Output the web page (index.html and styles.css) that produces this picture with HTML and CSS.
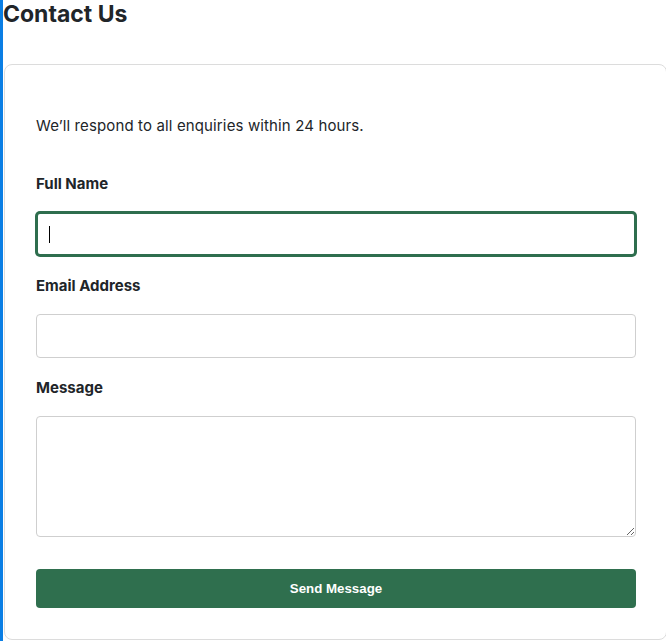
FILE: index.html
```html
<!DOCTYPE html>
<html lang="en">
<head>
<meta charset="utf-8">
<title>Contact Us</title>
<link rel="stylesheet" href="styles.css">
</head>
<body>
  <h1 class="title">Contact Us</h1>
  <div class="card">
    <p class="intro">We’ll respond to all enquiries within 24 hours.</p>
    <form class="form">
      <div class="field">
        <label class="label" for="name">Full Name</label>
        <div class="control">
          <input class="input input-focus" id="name" type="text">
          <span class="caret"></span>
        </div>
      </div>
      <div class="field">
        <label class="label" for="email">Email Address</label>
        <input class="input" id="email" type="email">
      </div>
      <div class="field">
        <label class="label" for="msg">Message</label>
        <textarea class="input textarea" id="msg"></textarea>
      </div>
      <button class="btn" type="button">Send Message</button>
    </form>
  </div>
</body>
</html>
```

FILE: styles.css
```css
html { overflow: hidden; }
body {
  margin: 0;
  border-left: 3px solid #0a7ee4;
  min-height: 641px;
  box-sizing: border-box;
  font-family: Inter, "Liberation Sans", sans-serif;
  color: #212529;
  background: #fff;
}
.title {
  margin: 0;
  padding-top: 1px;
  font-size: 23px;
  line-height: 26px;
  font-weight: 700;
}
.card {
  margin: 37px 0 0 1px;
  width: 663px;
  box-sizing: border-box;
  border: 1px solid #dcdcdc;
  border-radius: 8px;
  padding: 32px 31px 31px 31px;
}
.intro {
  margin: 18px 0 35px;
  font-size: 15px;
  line-height: 22px;
  letter-spacing: 0.13px;
}
.form { display: flex; flex-direction: column; }
.field { display: flex; flex-direction: column; margin-bottom: 18px; }
.field:last-of-type { margin-bottom: 32px; }
.label {
  font-size: 15px;
  line-height: 22px;
  font-weight: 700;
  margin: 1px 0 17px;
}
.control { position: relative; }
.input {
  display: block;
  width: 600px;
  height: 44px;
  box-sizing: border-box;
  border: 1px solid #cfcfcf;
  border-radius: 4px;
  padding: 0 12px;
  font: inherit;
  background: #fff;
  outline: none;
}
.input-focus {
  border: 2px solid #2e6e4e;
  box-shadow: 0 0 0 1px #2e6e4e;
}
.caret {
  position: absolute;
  left: 13px;
  top: 14px;
  width: 1px;
  height: 17px;
  background: #000;
}
.textarea {
  height: 121px;
  resize: vertical;
  padding: 10px 12px;
}
.btn {
  width: 600px;
  height: 39px;
  border: none;
  border-radius: 4px;
  background: #2f6f4e;
  color: #fff;
  font-family: "Liberation Sans", Arial, sans-serif;
  font-size: 13.3px;
  font-weight: 700;
  cursor: pointer;
}
```
